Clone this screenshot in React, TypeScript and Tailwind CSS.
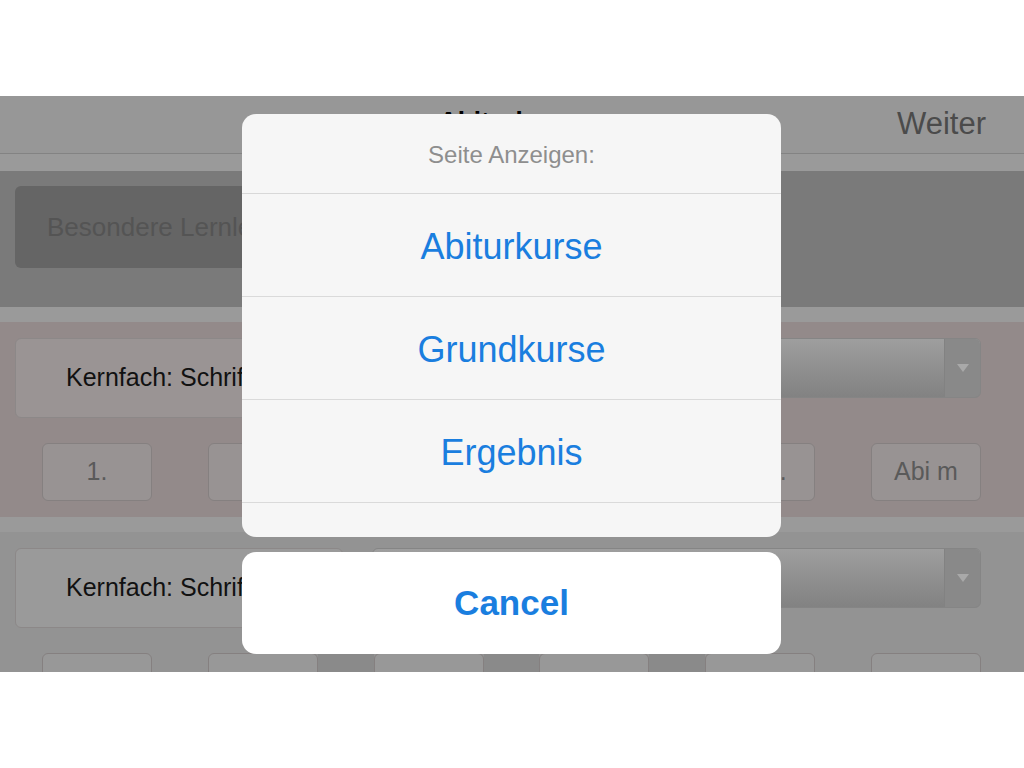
const FONT = "font-['Liberation_Sans',Arial,sans-serif]";

const Dropdown = () => (
  <div className="flex h-[60px] flex-1 overflow-hidden rounded-[6px] border border-[#858585] bg-gradient-to-b from-[#9e9e9e] to-[#828282]">
    <div className="flex-1" />
    <div className="flex w-[36px] items-center justify-center border-l border-[#828282] bg-[#898989]">
      <svg width="14" height="10" viewBox="0 0 14 10">
        <path d="M1 1 L13 1 L7 9 Z" fill="#a9a9a9" />
      </svg>
    </div>
  </div>
);

const SmallButton = ({ label, light }: { label?: string; light: string }) => (
  <div
    className={`flex h-[58px] w-[110px] items-center justify-center rounded-[6px] border border-[#858080] text-[25px] text-[#5a5a5a] ${light}`}
  >
    {label}
  </div>
);

const Gap = ({ dark }: { dark?: boolean }) => (
  <div className={`h-[58px] flex-1 ${dark ? "bg-[#8a8a8a]" : ""}`} />
);

const CourseSection = ({
  bg,
  boxBg,
  btnBg,
  labels,
  darkGaps,
}: {
  bg: string;
  boxBg: string;
  btnBg: string;
  labels: string[];
  darkGaps?: boolean;
}) => (
  <section className={`px-[15px] pt-[16px] pb-[16px] ${bg}`}>
    <div className="flex items-start gap-[29px] pr-[28px]">
      <div
        className={`flex h-[80px] w-[328px] shrink-0 items-center rounded-[6px] border border-[#8c8888] pl-[50px] text-[25px] text-[#111] ${boxBg}`}
      >
        Kernfach: Schriftlich
      </div>
      <Dropdown />
    </div>
    <div className="mt-[25px] flex items-center pl-[27px] pr-[28px]">
      <SmallButton label={labels[0]} light={btnBg} />
      <Gap />
      <SmallButton label={labels[1]} light={btnBg} />
      <Gap dark={darkGaps} />
      <SmallButton label={labels[2]} light={btnBg} />
      <Gap dark={darkGaps} />
      <SmallButton label={labels[3]} light={btnBg} />
      <Gap dark={darkGaps} />
      <SmallButton label={labels[4]} light={btnBg} />
      <Gap />
      <SmallButton label={labels[5]} light={btnBg} />
    </div>
  </section>
);

const ActionSheet = () => (
  <div className="absolute left-[242px] top-[18px] flex w-[539px] flex-col gap-[15px]">
    <div className="overflow-hidden rounded-[14px] bg-[#f6f6f6]">
      <div className="flex h-[80px] items-center justify-center border-b border-[#d8d8d8] pt-[3px] text-[24px] text-[#8e8e8e]">
        Seite Anzeigen:
      </div>
      {["Abiturkurse", "Grundkurse", "Ergebnis"].map((item) => (
        <div
          key={item}
          className="flex h-[103px] items-center justify-center border-b border-[#dadada] pt-[3px] text-[36px] text-[#1a7edf]"
        >
          {item}
        </div>
      ))}
      <div className="h-[34px]" />
    </div>
    <div className="flex h-[102px] items-center justify-center rounded-[14px] bg-white text-[35px] font-bold text-[#1a7edf]">
      Cancel
    </div>
  </div>
);

export default function App() {
  return (
    <div className={`flex h-[768px] w-[1024px] flex-col bg-white ${FONT}`}>
      <div className="h-[96px] shrink-0" />
      <div className="relative h-[576px] shrink-0 overflow-hidden bg-[#939393]">
        {/* nav bar */}
        <header className="grid h-[58px] grid-cols-3 border-b border-[#838383] bg-[#979797]">
          <div />
          <div className="self-start pt-[12px] text-center text-[26px] leading-none font-bold text-black">
            Abiturkurse
          </div>
          <div className="flex items-center justify-end pr-[38px] text-[31px] text-[#4b4b4b]">
            Weiter
          </div>
        </header>
        <div className="h-[17px] bg-[#9a9a9a]" />

        <section className="h-[136px] bg-[#7a7a7a] px-[15px] pt-[15px]">
          <div className="flex h-[82px] w-[500px] items-center rounded-[6px] bg-[#656565] pl-[32px] text-[26px] text-[#545454]">
            Besondere Lernleistung
          </div>
        </section>
        <div className="h-[15px] bg-[#9a9a9a]" />

        <CourseSection
          bg="bg-[#938a8a]"
          boxBg="bg-[#9a9494]"
          btnBg="bg-[#989393]"
          labels={["1.", "2.", "3.", "4.", "Ges.", "Abi m"]}
        />
        <div className="h-[15px] bg-[#9a9a9a]" />

        <CourseSection
          bg="bg-[#939393]"
          boxBg="bg-[#9a9a9a]"
          btnBg="bg-[#989898]"
          labels={["", "", "", "", "", ""]}
          darkGaps
        />

        <ActionSheet />
      </div>
      <div className="flex-1" />
    </div>
  );
}
